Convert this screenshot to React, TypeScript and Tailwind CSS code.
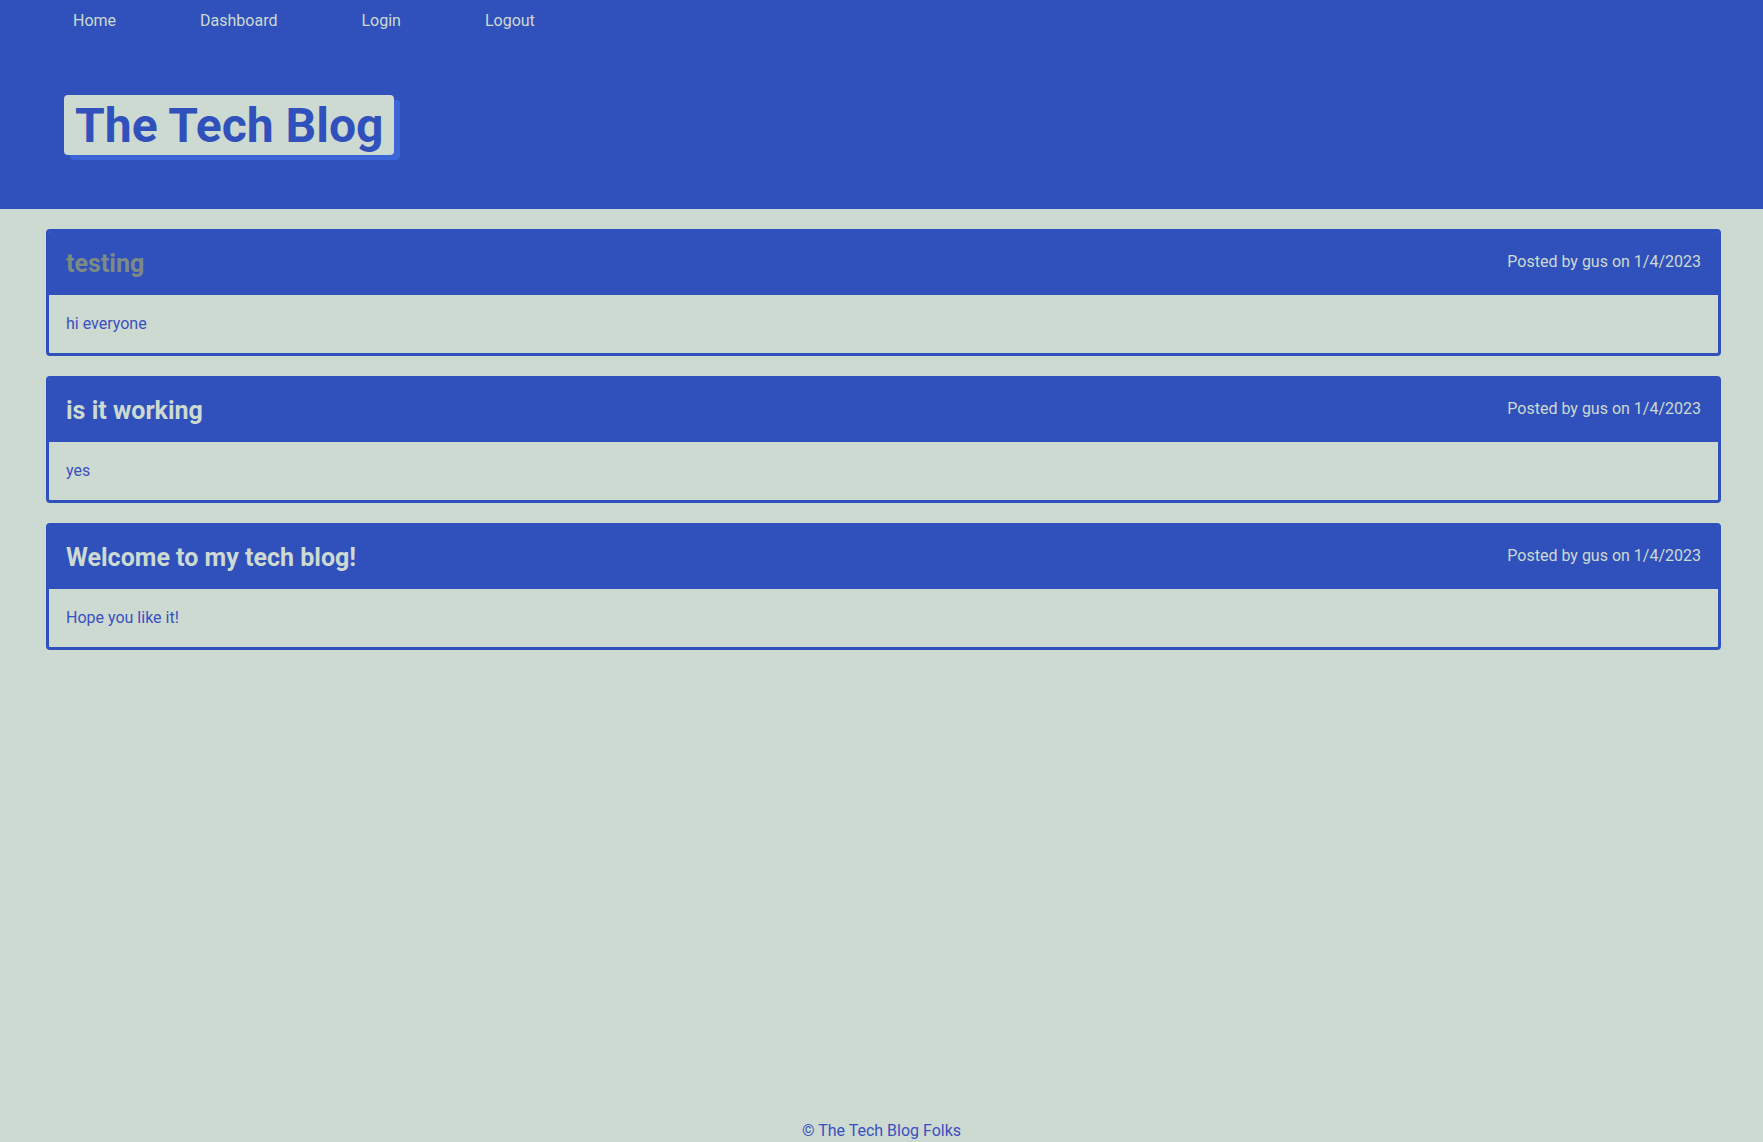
import React from "react"

type Post = {
  title: string,
  body: string,
  author: string,
  date: string,
  muted?: boolean
}

const posts: Post[] = [
  { title: "testing", body: "hi everyone", author: "gus", date: "1/4/2023", muted: true },
  { title: "is it working", body: "yes", author: "gus", date: "1/4/2023" },
  { title: "Welcome to my tech blog!", body: "Hope you like it!", author: "gus", date: "1/4/2023" },
]

const PostCard = ({ title, body, author, date, muted }: Post) => {
  return (
    <div className="border-[3px] border-[#3051bc] rounded-[4px] overflow-hidden">
      <div className="bg-[#3051bc] h-[63px] flex flex-row justify-between items-start px-[17px]">
        <h2 className={`mt-[17px] text-[25px] leading-[30px] font-bold ${muted ? "text-[#7d8c83]" : "text-[#cddad1]"}`}>
          {title}
        </h2>
        <span className="mt-[20px] text-[16px] leading-[20px] text-[#cddad1]">
          Posted by {author} on {date}
        </span>
      </div>
      <div className="h-[58px] px-[17px] flex items-center text-[16px] text-[#3a50c0]">
        {body}
      </div>
    </div>
  )
}

const App = () => {
  return (
    <div
      className="min-h-screen bg-[#cddad1] flex flex-col"
      style={{ fontFamily: 'Roboto, "Noto Sans", sans-serif' }}
    >
      <header className="bg-[#3051bc] h-[209px] flex flex-col">
        <nav className="flex flex-row pl-[73px] pt-[10px] gap-[84px] text-[16px] leading-[22px] text-[#cddad1]">
          <a href="#">Home</a>
          <a href="#">Dashboard</a>
          <a href="#">Login</a>
          <a href="#">Logout</a>
        </nav>
        <div className="pl-[64px] pt-[63px]">
          <h1 className="inline-block bg-[#cddad1] text-[#3051bc] rounded-[4px] h-[60px] px-[11px] text-[48px] leading-[62px] font-bold shadow-[6px_5px_0_#3a66d8]">
            The Tech Blog
          </h1>
        </div>
      </header>

      <main className="flex flex-col gap-[20px] pl-[46px] pr-[42px] pt-[20px]">
        {posts.map((post) => (
          <PostCard key={post.title} {...post} />
        ))}
      </main>

      <footer className="mt-auto text-center text-[16px] leading-[22px] text-[#3a50c0]">
        © The Tech Blog Folks
      </footer>
    </div>
  )
}

export default App
